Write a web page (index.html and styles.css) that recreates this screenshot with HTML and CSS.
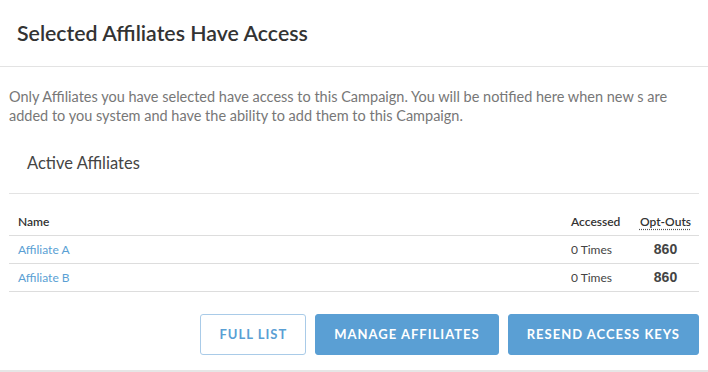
FILE: index.html
```html
<!DOCTYPE html>
<html>
<head>
<meta charset="utf-8">
<link rel="stylesheet" href="styles.css">
</head>
<body>
<div class="panel">
  <div class="panel-head">
    <h2 class="title">Selected Affiliates Have Access</h2>
  </div>
  <div class="panel-body">
    <p class="desc">Only Affiliates you have selected have access to this Campaign. You will be notified here when new s are added to you system and have the ability to add them to this Campaign.</p>
    <h3 class="subtitle">Active Affiliates</h3>
    <table class="aff-table">
      <thead>
        <tr>
          <th class="c-name">Name</th>
          <th class="c-acc">Accessed</th>
          <th class="c-opt"><abbr class="opt" title="Opt-Outs">Opt-Outs</abbr></th>
        </tr>
      </thead>
      <tbody>
        <tr>
          <td class="c-name"><a class="link" href="#">Affiliate A</a></td>
          <td class="c-acc">0 Times</td>
          <td class="c-opt num">860</td>
        </tr>
        <tr>
          <td class="c-name"><a class="link" href="#">Affiliate B</a></td>
          <td class="c-acc">0 Times</td>
          <td class="c-opt num">860</td>
        </tr>
      </tbody>
    </table>
    <div class="actions">
      <button class="btn btn-outline">Full List</button>
      <button class="btn btn-solid">Manage Affiliates</button>
      <button class="btn btn-solid">Resend Access Keys</button>
    </div>
  </div>
</div>
</body>
</html>
```
FILE: styles.css
```css
* { box-sizing: border-box; }
html, body { margin: 0; padding: 0; background: #fff; }
body {
  font-family: Lato, "Open Sans", "Liberation Sans", sans-serif;
  color: #333;
  width: 708px;
  height: 372px;
  overflow: hidden;
}
.panel {
  border-bottom: 2px solid #e6e6e6;
  height: 372px;
}
.panel-head {
  height: 67px;
  border-bottom: 1px solid #e3e3e3;
  padding: 0 17px;
  display: flex;
  align-items: center;
}
.title {
  margin: 0;
  font-size: 21.3px;
  font-weight: 600;
  color: #333;
}
.panel-body {
  padding: 20px 9px 0 9px;
}
.desc {
  margin: 0;
  font-size: 14.5px;
  line-height: 19px;
  color: #777;
}
.subtitle {
  margin: 28px 0 0 0;
  padding: 0 0 0 18px;
  font-size: 16.5px;
  font-weight: 400;
  color: #444;
  height: 41px;
  line-height: 20px;
  border-bottom: 1px solid #e3e3e3;
}
.aff-table {
  width: 100%;
  border-collapse: collapse;
  margin-top: 14px;
  font-size: 12px;
}
.aff-table th {
  font-weight: 600;
  color: #333;
  text-align: left;
  height: 27px;
  padding: 0;
  border-bottom: 1px solid #ddd;
}
.aff-table td {
  height: 28px;
  padding: 0;
  border-bottom: 1px solid #ddd;
  color: #444;
}
.c-name { padding-left: 9px !important; }
.c-acc { width: 61px; }
.c-opt { width: 67px; text-align: center !important; }
.opt {
  text-decoration: underline dotted #555;
  text-underline-offset: 3px;
}
.num {
  font-family: "Liberation Sans", Arial, sans-serif;
  font-weight: 700;
  font-size: 14px;
  color: #333;
}
.link {
  color: #5a9fd4;
  text-decoration: none;
}
.actions {
  display: flex;
  justify-content: flex-end;
  gap: 9px;
  margin-top: 22px;
}
.btn {
  font-family: Lato, "Open Sans", sans-serif;
  height: 41px;
  border-radius: 3px;
  font-size: 13px;
  font-weight: 700;
  text-transform: uppercase;
  letter-spacing: 1px;
  padding: 0 18px;
  white-space: nowrap;
  cursor: pointer;
}
.btn-outline {
  background: #fff;
  color: #5a9fd4;
  border: 1px solid #a9cbe8;
}
.btn-solid {
  background: #5a9fd4;
  color: #fff;
  border: 1px solid #5a9fd4;
}
```
